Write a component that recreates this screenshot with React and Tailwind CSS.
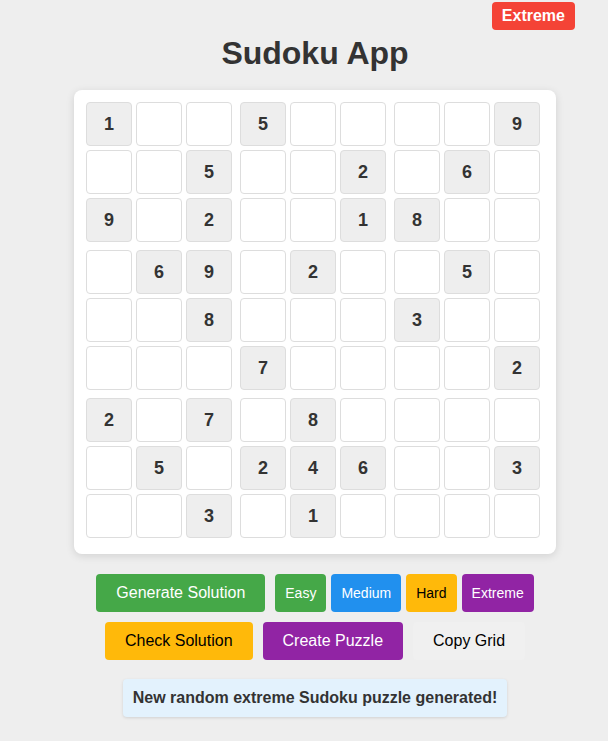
import { useState } from 'react'

const puzzle = [
    '1..5....9',
    '..5..2.6.',
    '9.2..18..',
    '.69.2..5.',
    '..8...3..',
    '...7....2',
    '2.7.8....',
    '.5.246..3',
    '..3.1....',
]

export default function App() {
    const [message] = useState('New random extreme Sudoku puzzle generated!')

    return (
        <div className="relative min-h-screen bg-[#eeeeee] font-['Liberation_Sans',Arial,sans-serif] text-[#333]">
            {/* Difficulty badge */}
            <div className="absolute top-[2px] right-[33px] rounded bg-[#f44336] px-[10px] py-[5px] text-base leading-[18px] font-bold text-white">
                Extreme
            </div>

            <div className="flex flex-col items-center pl-[22px] pt-[35px]">
                <h1 className="text-[32px] leading-[36px] font-bold text-[#333]">Sudoku App</h1>

                {/* Board */}
                <div className="mt-[19px] w-[482px] rounded-lg bg-white pt-3 pl-3 pr-4 pb-4 shadow-[0_2px_8px_rgba(0,0,0,0.12)]">
                    <div className="flex flex-col gap-1">
                        {puzzle.map((row, r) => (
                            <div key={r} className={`flex gap-1 ${r === 2 || r === 5 ? 'mb-1' : ''}`}>
                                {row.split('').map((ch, c) => (
                                    <div
                                        key={c}
                                        className={`flex h-[44px] w-[46px] items-center justify-center rounded border border-[#dddddd] text-lg font-bold text-[#333] ${ch !== '.' ? 'bg-[#eeeeee]' : 'bg-white'} ${c === 2 || c === 5 ? 'mr-1' : ''}`}
                                    >
                                        {ch !== '.' ? ch : ''}
                                    </div>
                                ))}
                            </div>
                        ))}
                    </div>
                </div>

                {/* Controls */}
                <div className="mt-5 flex gap-[10px]">
                    <button className="rounded bg-[#45a848] px-5 py-[10px] text-base leading-[18px] text-white">
                        Generate Solution
                    </button>
                    <div className="flex gap-[5px]">
                        <button className="rounded bg-[#45a848] px-[10px] text-sm text-white">Easy</button>
                        <button className="rounded bg-[#2190ee] px-[10px] text-sm text-white">Medium</button>
                        <button className="rounded bg-[#ffb90a] px-[10px] text-sm text-black">Hard</button>
                        <button className="rounded bg-[#9124a4] px-[10px] text-sm text-white">Extreme</button>
                    </div>
                </div>

                <div className="mt-[10px] flex gap-[10px]">
                    <button className="rounded bg-[#ffb90a] px-5 py-[10px] text-base leading-[18px] text-black">
                        Check Solution
                    </button>
                    <button className="rounded bg-[#9124a4] px-5 py-[10px] text-base leading-[18px] text-white">
                        Create Puzzle
                    </button>
                    <button className="rounded bg-[#f0f0f0] px-5 py-[10px] text-base leading-[18px] text-black">
                        Copy Grid
                    </button>
                </div>

                {/* Status message */}
                <div className="mt-[19px] rounded bg-[#e3f2fd] px-[10px] py-[10px] text-base leading-[18px] font-bold text-[#333] shadow-[0_1px_3px_rgba(0,0,0,0.12)]">
                    {message}
                </div>
            </div>
        </div>
    )
}
